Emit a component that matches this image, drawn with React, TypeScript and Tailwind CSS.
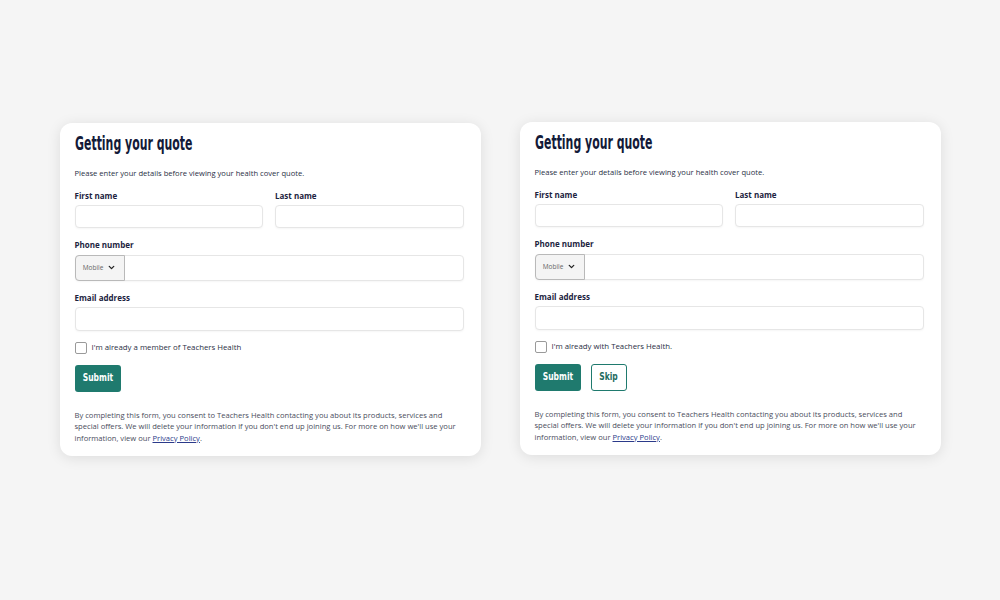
import { ChevronDown } from 'lucide-react'

const body = { fontFamily: '"Open Sans", "Noto Sans", sans-serif' }
const display = { fontFamily: '"DejaVu Sans Condensed", "DejaVu Sans", sans-serif' }

function Field({ label, tall }: { label: string; tall?: boolean }) {
  return (
    <div className="flex flex-col">
      <label className="text-[8px] font-bold text-[#1c2340] leading-none mb-[5px]">{label}</label>
      <div
        className={`${tall ? 'h-[24px]' : 'h-[23px]'} rounded-[4px] border border-[#e6e6e6] bg-white shadow-[0_1px_2px_rgba(0,0,0,0.04)]`}
      />
    </div>
  )
}

function QuoteCard({ memberText, showSkip }: { memberText: string; showSkip?: boolean }) {
  return (
    <div
      className="w-[421px] rounded-[12px] bg-white shadow-[0_2px_14px_rgba(0,0,0,0.10)] pl-[15px] pr-[17px] pt-[9px] pb-[12px]"
      style={body}
    >
      <h2
        className="text-[19px] font-bold text-[#131a38] leading-none inline-block origin-left scale-x-[0.64] whitespace-nowrap"
        style={display}
      >
        Getting your quote
      </h2>

      <p className="mt-[14px] text-[7.6px] text-[#2a2f45] leading-none">
        Please enter your details before viewing your health cover quote.
      </p>

      <div className="mt-[14px] grid grid-cols-2 gap-[12px]">
        <Field label="First name" />
        <Field label="Last name" />
      </div>

      <div className="mt-[13px] flex flex-col">
        <label className="text-[8px] font-bold text-[#1c2340] leading-none mb-[6px]">Phone number</label>
        <div className="flex h-[26px] rounded-[4px] border border-[#e6e6e6] bg-white shadow-[0_1px_2px_rgba(0,0,0,0.04)]">
          <div className="w-[50px] -m-px flex items-center justify-center gap-[4px] rounded-l-[4px] border border-[#b9b9b9] bg-[#f4f4f4]">
            <span className="text-[6.5px] text-[#666]">Mobile</span>
            <ChevronDown size={9} strokeWidth={3.5} className="text-[#222]" />
          </div>
        </div>
      </div>

      <div className="mt-[13px]">
        <Field label="Email address" tall />
      </div>

      <div className="mt-[11px] flex items-center gap-[5px]">
        <div className="w-[12px] h-[12px] rounded-[2px] border border-[#9a9a9a] bg-white" />
        <span className="text-[7.8px] text-[#2a2f45] leading-none">{memberText}</span>
      </div>

      <div className="mt-[11px] flex gap-[10px]">
        <button className="w-[46px] h-[27px] rounded-[3px] bg-[#1f7a6e] text-white flex items-center justify-center">
          <span className="text-[10.5px] font-bold inline-block scale-x-[0.8]" style={display}>
            Submit
          </span>
        </button>
        {showSkip && (
          <button className="w-[36px] h-[27px] rounded-[3px] border-[1.5px] border-[#1f7a6e] bg-white text-[#1f6b60] flex items-center justify-center">
            <span className="text-[10.5px] font-bold inline-block scale-x-[0.8]" style={display}>
              Skip
            </span>
          </button>
        )}
      </div>

      <p className="mt-[18px] text-[7.6px] leading-[11.5px] text-[#4a4d5c]">
        By completing this form, you consent to Teachers Health contacting you about its products, services and
        special offers. We will delete your information if you don't end up joining us. For more on how we'll use your
        information, view our{' '}
        <a className="underline text-[#2b3a8a]">Privacy Policy</a>.
      </p>
    </div>
  )
}

export default function App() {
  return (
    <div className="w-[1000px] h-[600px] bg-[#f5f5f5] flex items-start justify-center gap-[39px] pt-[122px]">
      <div className="mt-px">
        <QuoteCard memberText="I'm already a member of Teachers Health" />
      </div>
      <QuoteCard memberText="I'm already with Teachers Health." showSkip />
    </div>
  )
}
